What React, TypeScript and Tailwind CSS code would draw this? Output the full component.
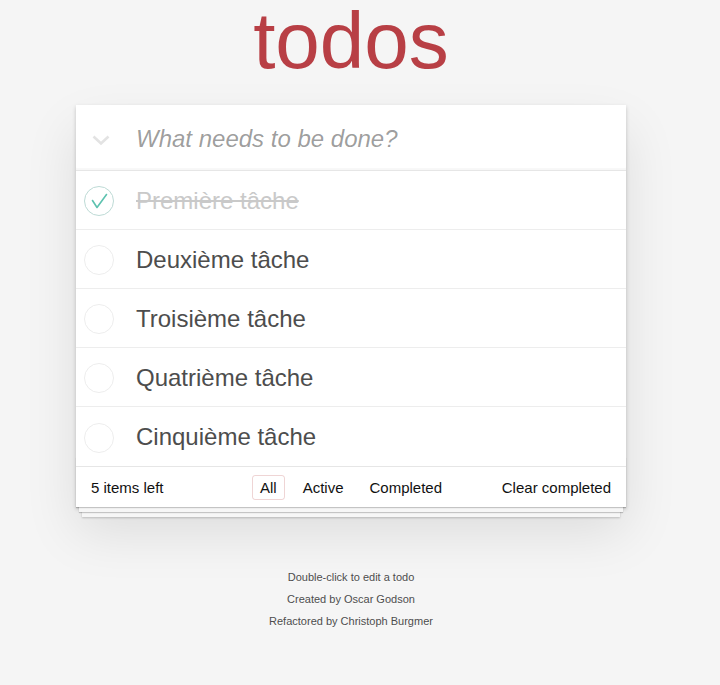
import React from "react";

const todos = [
  { text: "Première tâche", done: true },
  { text: "Deuxième tâche", done: false },
  { text: "Troisième tâche", done: false },
  { text: "Quatrième tâche", done: false },
  { text: "Cinquième tâche", done: false },
];

function Circle({ done }: { done: boolean }) {
  return (
    <svg width="30" height="30" viewBox="0 0 30 30" className="shrink-0">
      <circle cx="15" cy="15" r="14.5" fill="none" stroke={done ? "#bddad5" : "#ededed"} strokeWidth="1" />
      {done && (
        <path d="M8.5 14.5 L13 21.5 L22.5 8.5" fill="none" stroke="#5dc2af" strokeWidth="1.6" strokeLinecap="round" strokeLinejoin="round" />
      )}
    </svg>
  );
}

export default function App() {
  return (
    <div className="min-h-[685px] w-full bg-[#f5f5f5] text-[#111]" style={{ fontFamily: '"Liberation Sans", Arial, sans-serif' }}>
      <div className="w-[702px]">
        <div className="mx-auto w-[550px] pt-[1px]">
          <h1 className="h-[80px] text-center text-[80px] leading-[80px] font-normal text-[#b83f45]">todos</h1>
          <section className="mt-[24px] bg-white shadow-[0_2px_4px_0_rgba(0,0,0,0.2),0_25px_50px_0_rgba(0,0,0,0.1)]">
            <div className="flex h-[65px] items-center shadow-[inset_0_-2px_1px_rgba(0,0,0,0.03)]">
              <div className="flex w-[60px] shrink-0 justify-start pl-[16px] pt-[5px]">
                <svg width="18" height="11" viewBox="0 0 18 11">
                  <path d="M1.5 1.5 L9 8.5 L16.5 1.5" fill="none" stroke="#e3e3e3" strokeWidth="2.6" strokeLinejoin="miter" />
                </svg>
              </div>
              <input
                className="w-full bg-transparent pr-4 pt-[3px] text-[24px] leading-[33.6px] italic text-[#4d4d4d] outline-none placeholder:italic placeholder:text-black/40"
                placeholder="What needs to be done?"
              />
            </div>
            <ul className="border-t border-[#e6e6e6]">
              {todos.map((t, i) => (
                <li
                  key={i}
                  className={`flex h-[59px] items-center pt-[2px] ${i < todos.length - 1 ? "border-b border-[#ededed]" : "h-[58px]"}`}
                >
                  <div className="flex w-[60px] shrink-0 justify-start pl-[8px]">
                    <Circle done={t.done} />
                  </div>
                  <span
                    className={`text-[24px] leading-[28.8px] ${t.done ? "text-[#c9c9c9] line-through" : "text-[#4d4d4d]"}`}
                  >
                    {t.text}
                  </span>
                </li>
              ))}
            </ul>
            <footer className="relative grid h-[41px] grid-cols-[1fr_auto_1fr] items-center border-t border-[#e6e6e6] px-[15px] text-[15px] leading-[17px] before:absolute before:inset-x-0 before:bottom-0 before:h-[50px] before:overflow-hidden before:content-[''] before:shadow-[0_1px_1px_rgba(0,0,0,0.2),0_8px_0_-3px_#f6f6f6,0_9px_1px_-3px_rgba(0,0,0,0.2),0_16px_0_-6px_#f6f6f6,0_17px_2px_-6px_rgba(0,0,0,0.2)]">
              <span className="relative">5 items left</span>
              <div className="relative flex gap-[10px]">
                <span className="rounded-[3px] border border-[rgba(175,47,47,0.2)] px-[7px] py-[3px]">All</span>
                <span className="rounded-[3px] border border-transparent px-[7px] py-[3px]">Active</span>
                <span className="rounded-[3px] border border-transparent px-[7px] py-[3px]">Completed</span>
              </div>
              <span className="relative justify-self-end">Clear completed</span>
            </footer>
          </section>
          <footer className="mt-[65px] flex flex-col items-center gap-[11px] text-[11px] leading-[11px] text-[#4d4d4d] [text-shadow:0_1px_0_rgba(255,255,255,0.5)]">
            <p>Double-click to edit a todo</p>
            <p>Created by Oscar Godson</p>
            <p>Refactored by Christoph Burgmer</p>
          </footer>
        </div>
      </div>
    </div>
  );
}
